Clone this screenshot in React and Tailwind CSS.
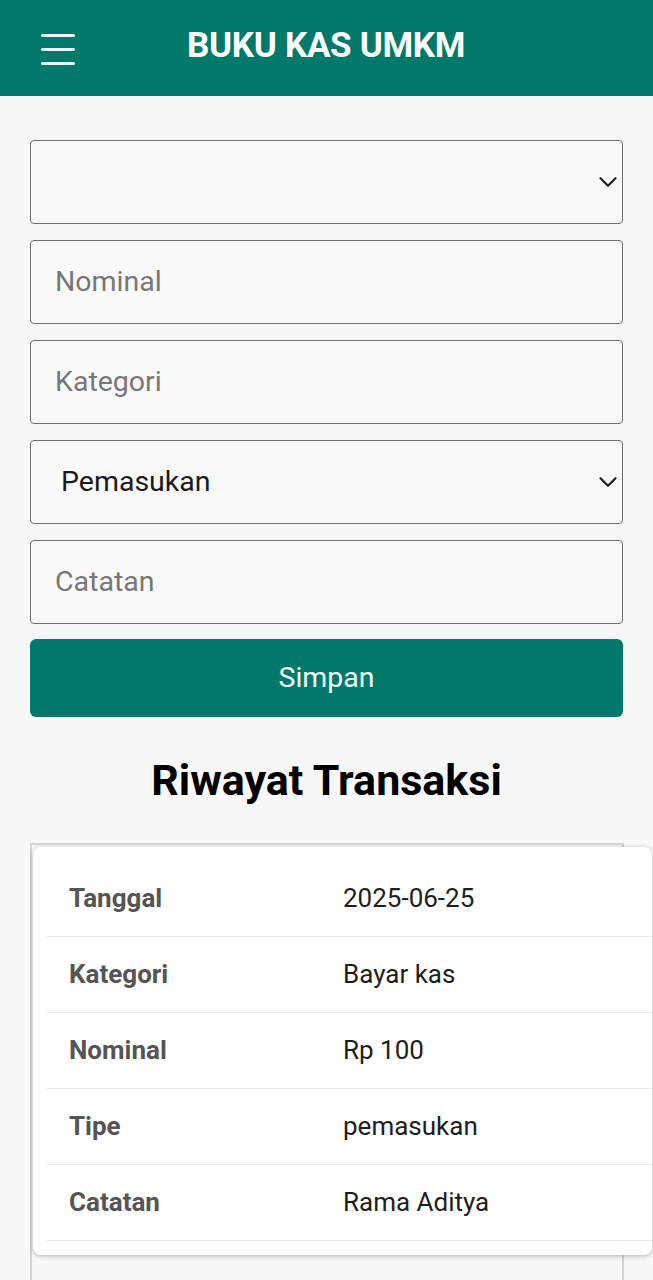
import { ChevronDown } from "lucide-react"

const rows = [
  ["Tanggal", "2025-06-25"],
  ["Kategori", "Bayar kas"],
  ["Nominal", "Rp 100"],
  ["Tipe", "pemasukan"],
  ["Catatan", "Rama Aditya"],
]

function Field({ placeholder }) {
  return (
    <div className="h-[84px] rounded-[4px] border-[1.5px] border-[#707070] bg-[#f9f9f9] flex items-center pl-[24px]">
      <span className="text-[28.5px] text-[#777777]">{placeholder}</span>
    </div>
  )
}

function SelectBox({ value }) {
  return (
    <div className="h-[84px] rounded-[4px] border-[1.5px] border-[#707070] bg-[#f9f9f9] flex items-center justify-between pl-[30px]">
      <span className="text-[28.5px] text-[#1a1a1a]">{value}</span>
      <ChevronDown size={30} strokeWidth={1.8} className="text-[#222] -mr-[1px]" />
    </div>
  )
}

export default function App() {
  return (
    <div className="min-h-[1280px] bg-[#f8f8f8] font-['Roboto',sans-serif] overflow-hidden">
      {/* Header */}
      <header className="h-[96px] bg-[#00796b] flex items-center pl-[41px]">
        <div className="flex flex-col gap-[11px] w-[34px] mt-[2px]">
          <span className="h-[3px] bg-[#e6fbf8] rounded-sm" />
          <span className="h-[3px] bg-[#e6fbf8] rounded-sm" />
          <span className="h-[3px] bg-[#e6fbf8] rounded-sm" />
        </div>
        <h1 className="ml-[112px] -mt-[4px] text-[35px] font-bold text-white tracking-[-0.3px]">BUKU KAS UMKM</h1>
      </header>

      {/* Form */}
      <div className="px-[30px] pt-[44px] flex flex-col gap-[16px]">
        <SelectBox value="" />
        <Field placeholder="Nominal" />
        <Field placeholder="Kategori" />
        <SelectBox value="Pemasukan" />
        <Field placeholder="Catatan" />
        <button className="-mt-[1px] h-[78px] rounded-[6px] bg-[#00796b] text-[28.5px] text-[#f0fffc]">Simpan</button>
      </div>

      {/* Riwayat */}
      <h2 className="mt-[36px] text-center text-[43px] font-bold text-black leading-[54px]">Riwayat Transaksi</h2>

      <div className="mt-[36px] ml-[30px] w-[594px] h-[460px] border-t-2 border-l-2 border-r-2 border-[#d4d4d4]">
        <div className="mt-[2px] ml-[1px] w-[619px] rounded-[8px] bg-white shadow-[0_1px_5px_rgba(0,0,0,0.28)] pt-[14px] pb-[14px] pl-[14px]">
          {rows.map(([label, value]) => (
            <div key={label} className="h-[76px] flex items-center border-b border-[#e6e6e6] pl-[22px]">
              <span className="w-[274px] text-[26px] font-bold text-[#555555]">{label}</span>
              <span className="text-[26px] text-[#1e1e1e]">{value}</span>
            </div>
          ))}
        </div>
      </div>
    </div>
  )
}
